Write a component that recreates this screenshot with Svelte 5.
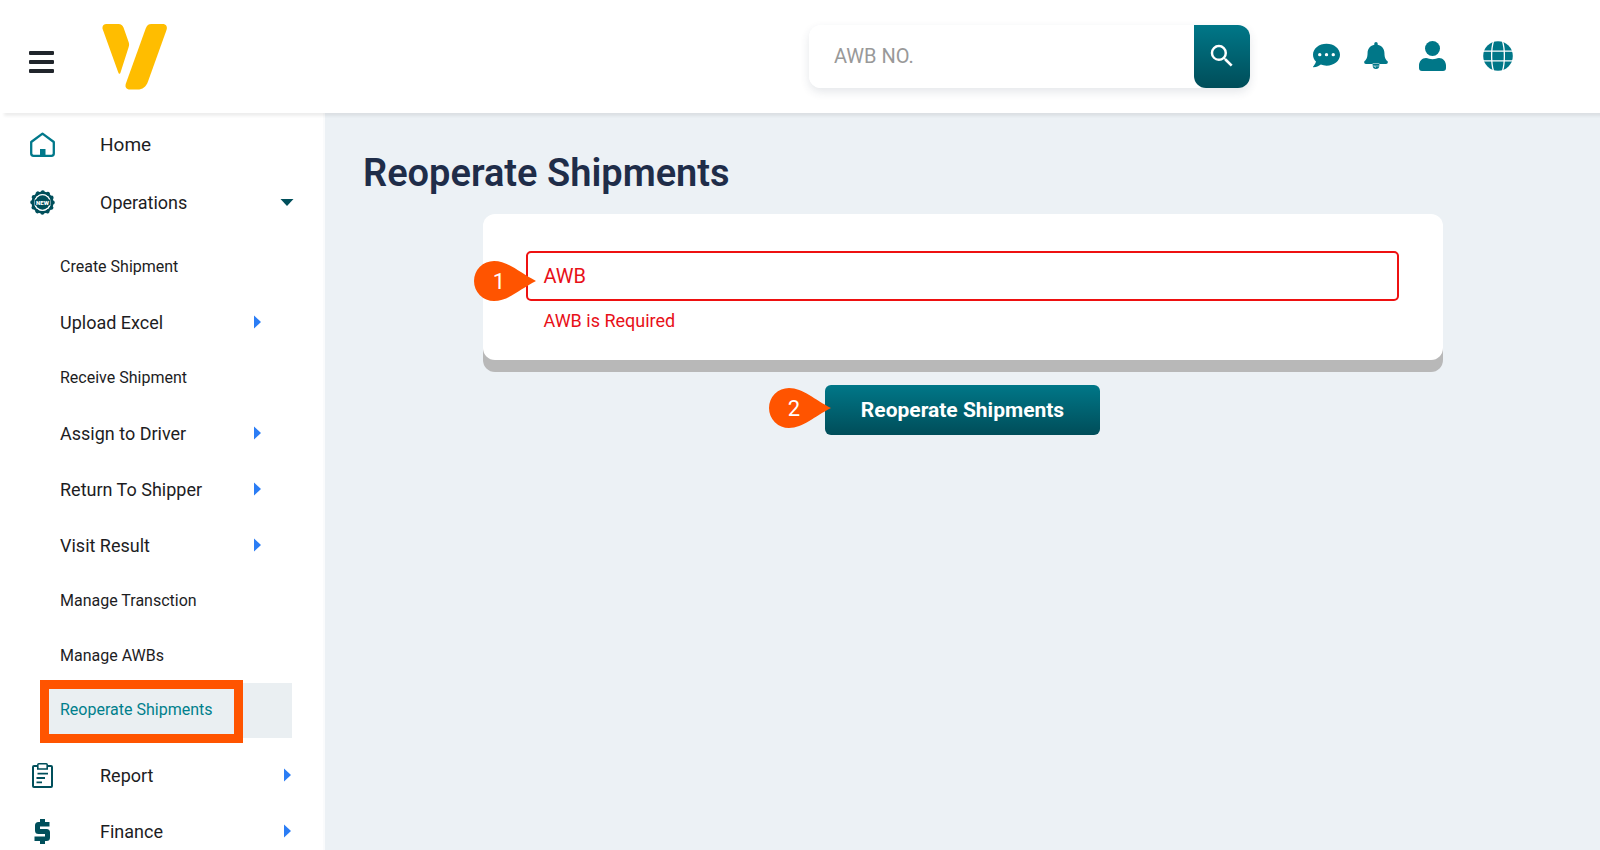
<script>
  let query = $state('');
  let awb = $state('');

  const operations = [
    { label: 'Create Shipment' },
    { label: 'Upload Excel', group: true },
    { label: 'Receive Shipment' },
    { label: 'Assign to Driver', group: true },
    { label: 'Return To Shipper', group: true },
    { label: 'Visit Result', group: true },
    { label: 'Manage Transction' },
    { label: 'Manage AWBs' },
    { label: 'Reoperate Shipments', active: true }
  ];
</script>

{#snippet caret()}
  <svg class="caret" width="7" height="14" viewBox="0 0 7 14" aria-hidden="true"><path d="M0 0.5L7 7L0 13.5z" /></svg>
{/snippet}

{#snippet callout(n)}
  <svg width="62" height="40" viewBox="0 0 62 40" aria-hidden="true">
    <path fill="#ff5400" d="M20 0C34 0 46 12 62 20C46 28 34 40 20 40A20 20 0 0 1 20 0z" />
    <text x="25" y="28" text-anchor="middle" fill="#fff" font-size="22">{n}</text>
  </svg>
{/snippet}

<div class="page">
  <header>
    <button class="plain menu" aria-label="Toggle menu">
      <svg width="25" height="22" viewBox="0 0 25 22"><path fill="#20252b" d="M1 0h23a1 1 0 0 1 1 1v2a1 1 0 0 1-1 1H1a1 1 0 0 1-1-1V1a1 1 0 0 1 1-1zM1 9h23a1 1 0 0 1 1 1v2a1 1 0 0 1-1 1H1a1 1 0 0 1-1-1v-2a1 1 0 0 1 1-1zM1 18h23a1 1 0 0 1 1 1v2a1 1 0 0 1-1 1H1a1 1 0 0 1-1-1v-2a1 1 0 0 1 1-1z" /></svg>
    </button>
    <a class="logo" href="#home" aria-label="Home page">
      <svg width="66" height="66" viewBox="0 0 66 66">
        <path fill="#ffbd00" d="M.8 5.500C-.3 2.400 1.300 0 4.500 0H16.500C19.200 0 20.500 1.200 21.500 3.500L26.700 18.300C27.300 20 27.200 21.500 26.600 23.300L18.600 48.200C18 50.200 16.900 50.200 16.200 48.200z" />
        <path fill="#ffbd00" d="M43.700 4.500C44.900 1.400 46.500 0 49.300 0H60.500C64.300 0 65.600 2.700 64.500 6L46 57.500C44 63 40.500 65.500 35.500 65.500H28C24.200 65.500 22.700 63 23.900 59.500z" />
      </svg>
    </a>
    <form class="search" onsubmit={(e) => e.preventDefault()}>
      <input aria-label="AWB number" placeholder="AWB NO." bind:value={query} />
      <button aria-label="Search">
        <svg width="30" height="30" viewBox="0 0 24 24"><path fill="#fff" d="M15.500 14h-.79l-.28-.27A6.471 6.471 0 0 0 16 9.500 6.500 6.500 0 1 0 9.500 16c1.610 0 3.090-.59 4.230-1.570l.27.28v.79l5 4.990L20.490 19l-4.990-5zm-6 0C7.010 14 5 11.990 5 9.500S7.010 5 9.500 5 14 7.010 14 9.500 11.990 14 9.500 14z" /></svg>
      </button>
    </form>
    <div class="tools">
      <button class="plain" aria-label="Messages">
        <svg width="27" height="27" viewBox="0 0 512 512"><path d="M256 32C114.600 32 0 125.100 0 240c0 49.600 21.400 95 57 130.700C44.500 421.100 2.700 466 2.200 466.500c-2.200 2.300-2.800 5.700-1.500 8.700S4.800 480 8 480c66.300 0 116-31.800 140.600-51.400 32.700 12.300 69 19.400 107.400 19.400 141.400 0 256-93.100 256-208S397.400 32 256 32zM128 272a32 32 0 1 1 0-64 32 32 0 0 1 0 64zm128 0a32 32 0 1 1 0-64 32 32 0 0 1 0 64zm128 0a32 32 0 1 1 0-64 32 32 0 0 1 0 64z" /></svg>
      </button>
      <button class="plain" aria-label="Notifications">
        <svg width="24" height="27" viewBox="0 0 448 512"><path d="M224 512c35.320 0 63.970-28.650 63.970-64H160.030c0 35.350 28.650 64 63.970 64zm215.390-149.710c-19.320-20.760-55.470-51.990-55.470-154.290 0-77.700-54.480-139.900-127.940-155.160V32c0-17.670-14.320-32-31.980-32s-31.980 14.330-31.980 32v20.840C118.560 68.100 64.080 130.300 64.080 208c0 102.300-36.150 133.530-55.470 154.290-6 6.450-8.660 14.160-8.610 21.710.11 16.400 12.980 32 32.100 32h383.800c19.120 0 32-15.600 32.100-32 .05-7.550-2.610-15.270-8.610-21.710zM160 410h128v50H160z" /><path d="M196 452q4 26 28 30" fill="none" stroke="#fff" stroke-width="12" /></svg>
      </button>
      <button class="plain account" aria-label="Account">
        <svg width="27" height="30" viewBox="0 0 27 30"><circle cx="13.500" cy="7.500" r="7.500" /><path d="M7 17C9 17 11 18.300 13.500 18.300S18 17 20 17C24 17 27 20.500 27 24.500V27Q27 30 24 30H3Q0 30 0 27V24.500C0 20.500 3 17 7 17z" /></svg>
      </button>
      <button class="plain language" aria-label="Language">
        <svg width="30" height="30" viewBox="0 0 30 30"><circle cx="15" cy="15" r="14.800" /><g fill="none" stroke="#fff" stroke-width="1.300"><path d="M0 10.200H30M0 19.800H30" /><path d="M10.500 0C8 8 8 22 10.500 30M19.500 0C22 8 22 22 19.500 30" /></g></svg>
      </button>
    </div>
  </header>

  <div class="body">
    <nav aria-label="Main">
      <a class="row home" href="#home">
        <span class="icon"><svg width="25" height="25" viewBox="0 0 25 25"><path d="M1.200 21.500V10L12.500 1.600L23.800 10V21.500Q23.800 23.800 21.500 23.800H3.500Q1.200 23.800 1.200 21.500z" fill="none" stroke="#00788a" stroke-width="2.300" stroke-linejoin="round" /><path fill="#00788a" d="M10 17h5.500v7H10z" /></svg></span>
        <span>Home</span>
      </a>
      <a class="row" href="#operations" aria-expanded="true">
        <span class="icon"><svg width="25" height="25" viewBox="0 0 25 25" fill="#004f5b"><circle cx="12.500" cy="12.500" r="9.800" fill="none" stroke="#004f5b" stroke-width="2.400" /><circle cx="12.500" cy="12.500" r="10.300" fill="none" stroke="#004f5b" stroke-width="4" stroke-linecap="round" stroke-dasharray="0.010 5.383" /><circle cx="12.500" cy="12.500" r="8.300" fill="#fff" /><circle cx="12.500" cy="12.500" r="7.200" /><path d="M4.500 9.700h16v5.600H4.500z" /><text x="12.500" y="14.800" text-anchor="middle" font-size="6" font-weight="900" fill="#fff">NEW</text></svg></span>
        <span>Operations</span>
        <svg class="open" width="14" height="7" viewBox="0 0 14 7" aria-hidden="true"><path d="M.5 0h13L7 7z" /></svg>
      </a>
      <div class="sub">
        {#each operations as item}
          <a href="#{item.label}" class:group={item.group} class:active={item.active} aria-current={item.active ? 'page' : undefined}>
            <span>{item.label}</span>
            {#if item.group}{@render caret()}{/if}
          </a>
        {/each}
      </div>
      <a class="row" href="#report">
        <span class="icon"><svg width="21" height="25" viewBox="0 0 21 25" fill="none" stroke="#004f5b"><path stroke-width="2" d="M5.500 3H2Q1 3 1 4V23Q1 24 2 24H19Q20 24 20 23V4Q20 3 19 3H15.500" /><path stroke-width="1.600" d="M5.800 1.800Q5.800.8 6.800.8H14.200Q15.200.8 15.200 1.800V6H5.800z" /><path stroke-width="1.800" d="M5.500 10.700H16M4.500 15H13M4.500 19.300H10" /></svg></span>
        <span>Report</span>{@render caret()}
      </a>
      <a class="row" href="#finance">
        <span class="icon"><svg width="16" height="25" viewBox="0 0 16 25"><path fill="#004f5b" d="M5.500 0h5v3H15V7.500H5.500V10H12Q15.500 10 15.500 13.500V18.500Q15.500 22 12 22H10.500V25H5.500V22H0V17.500H10.500V15H4Q.5 15 .5 11.500V6.500Q.5 3 4 3H5.500z" /></svg></span>
        <span>Finance</span>{@render caret()}
      </a>
    </nav>

    <main>
      <h1>Reoperate Shipments</h1>
      <form onsubmit={(e) => e.preventDefault()}>
        <div class="card">
          <div class="field">
            <label for="awb">AWB</label>
            <input id="awb" aria-invalid="true" aria-describedby="awb-error" bind:value={awb} />
            <span class="pin first">{@render callout(1)}</span>
          </div>
          <p id="awb-error">AWB is Required</p>
        </div>
        <div class="submit">
          <button>Reoperate Shipments</button>
          <span class="pin second">{@render callout(2)}</span>
        </div>
      </form>
    </main>
  </div>
</div>

<style>
  :global(body) { margin: 0; }
  *, *::after { box-sizing: border-box; }
  .page {
    display: flex;
    flex-direction: column;
    height: 100vh;
    overflow: hidden;
    background: #ecf1f5;
    color: #1d1d1f;
    font-family: Roboto, sans-serif;
    font-size: 18px;
  }
  svg { display: block; flex: none; }
  button, input { font: inherit; }
  button { cursor: pointer; border: 0; padding: 0; }
  a { color: inherit; text-decoration: none; }
  .plain { background: none; }

  header {
    display: flex;
    align-items: center;
    flex: none;
    height: 113px;
    padding: 0 87px 2px 29px;
    background: #fff;
    box-shadow: 4px 3px 3px rgba(0, 0, 0, 0.07);
    z-index: 1;
  }
  .menu { padding-top: 12px; }
  .logo { margin: 2px auto 0 48px; }
  .search {
    display: flex;
    width: 441px;
    height: 63px;
    margin-top: 2px;
    border-radius: 12px;
    box-shadow: 0 4px 10px rgba(40, 60, 80, 0.12);
  }
  .search input {
    flex: 1;
    min-width: 0;
    border: 0;
    outline: 0;
    padding: 0 25px 2px;
    border-radius: 12px 0 0 12px;
    background: #fff;
    font-size: 20px;
  }
  .search input::placeholder { color: #999; opacity: 1; }
  .search button {
    display: grid;
    place-items: center;
    width: 56px;
    padding-bottom: 2px;
    border-radius: 0 12px 12px 12px;
    background: linear-gradient(#007788, #004d59);
  }
  .tools {
    display: flex;
    align-items: center;
    gap: 24px;
    margin-left: 63px;
    fill: #007788;
  }
  .account { margin-left: 7px; }
  .language { margin-left: 13px; }

  .body { display: flex; flex: 1; min-height: 0; }
  nav {
    flex: none;
    width: 325px;
    height: 100%;
    padding: 4px 33px 0 30px;
    overflow: hidden;
    background: #fff;
    border-right: 2px solid #fafbfc;
  }
  .row { display: flex; align-items: center; height: 56px; }
  .home { height: 57px; padding-bottom: 2px; font-size: 19px; }
  .icon { width: 70px; }
  .icon svg { width: 25px; }
  .caret, .open { margin-left: auto; }
  .caret { margin-right: -1px; fill: #2b7df5; }
  .open { margin-right: -4px; fill: #004f5b; }
  .sub { padding: 9px 0; }
  .sub a {
    display: flex;
    align-items: center;
    height: 55px;
    padding: 0 30px;
    font-size: 16px;
  }
  .sub .group { height: 56px; font-size: 18px; }
  .sub .active {
    position: relative;
    margin-left: 10px;
    margin-right: -2px;
    padding: 0 20px 2px;
    background: #eaeff2;
    color: #007f8c;
  }
  .active::after {
    content: '';
    position: absolute;
    top: -3px;
    left: 0;
    width: 203px;
    height: 63px;
    border: 9px solid #ff5400;
  }

  main { flex: 1; padding: 38px 38px 0; }
  h1 {
    margin: 0;
    color: #1f2d49;
    font-size: 38px;
    font-weight: 600;
    line-height: 44px;
  }
  main form { display: flex; flex-direction: column; align-items: center; gap: 25px; margin-top: 19px; }
  .card {
    width: 100%;
    max-width: 960px;
    padding: 37px 44px 27px 43px;
    background: #fff;
    border-radius: 12px;
    box-shadow: 0 12px 0 #b8b8b8;
  }
  .field { display: grid; position: relative; }
  .field label, .field input { grid-area: 1 / 1; }
  .field label {
    align-self: center;
    padding-left: 18px;
    color: #e81018;
    font-size: 20px;
    pointer-events: none;
    z-index: 1;
  }
  .field input {
    width: 100%;
    height: 50px;
    padding: 0 16px;
    border: 2px solid #ee1111;
    border-radius: 5px;
    outline: 0;
    background: #fff;
    font-size: 20px;
  }
  .card p { margin: 8px 18px 0; color: #e81018; line-height: 24px; }
  .submit { position: relative; }
  .submit button {
    width: 275px;
    height: 50px;
    border-radius: 6px;
    background: linear-gradient(#007788, #004d59);
    color: #fff;
    font-size: 21px;
    font-weight: 700;
  }
  .pin { position: absolute; pointer-events: none; z-index: 2; }
  .first { top: 10px; left: -52px; }
  .second { top: 3px; left: -56px; }
</style>
